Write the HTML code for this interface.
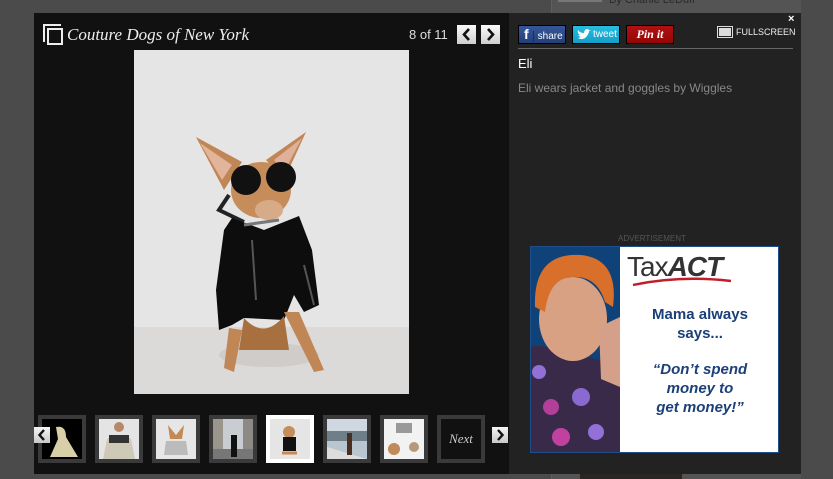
<!DOCTYPE html>
<html><head><meta charset="utf-8">
<style>
*{margin:0;padding:0;box-sizing:border-box}
body{width:833px;height:479px;background:#4b4b4b;position:relative;overflow:hidden;font-family:"Liberation Sans",Arial,sans-serif}
.bgpage{position:absolute;left:551px;top:0;width:250px;height:479px;background:#545454;border-left:1px solid #5e5e5e}
.bgtxt{position:absolute;left:609px;top:-6px;font-size:11px;color:#2a2a2a}
.left{position:absolute;left:34px;top:13px;width:475px;height:461px;background:#111}
.right{position:absolute;left:509px;top:13px;width:292px;height:461px;background:#222}
.title{position:absolute;left:67px;top:25px;font-family:"Liberation Serif",serif;font-style:italic;font-size:17px;color:#eee}
.count{position:absolute;left:409px;top:27px;font-size:13px;color:#ddd}
.nbtn{position:absolute;top:25px;width:19px;height:19px;background:linear-gradient(#fafafa,#cfcfcf);}
.photo{position:absolute;left:134px;top:50px;width:275px;height:344px;background:#e6e5e6;overflow:hidden}
.thumb{position:absolute;top:415px;width:48px;height:48px;border:4px solid #3a3a3a;overflow:hidden;background:#ddd}
.sbtn{position:absolute;top:25px;height:19px;border:1px solid #000;font-size:10px;color:#fff;line-height:17px}
</style></head><body>
<div class="bgpage"></div><div class="bgtxt">By Charlie LeDuff</div>
<div style="position:absolute;left:558px;top:0;width:44px;height:2px;background:#777"></div>
<div style="position:absolute;left:580px;top:474px;width:102px;height:5px;background:#2a2623"></div>
<div class="left"></div>
<div class="right"></div>
<div style="position:absolute;left:43px;top:24px;width:18px;height:18px;border-left:2px solid #eee;border-top:2px solid #eee"></div>
<div style="position:absolute;left:47px;top:28px;width:16px;height:17px;border:2px solid #eee"></div>
<div class="title">Couture Dogs of New York</div>
<div class="count">8 of 11</div>
<div class="nbtn" style="left:457px"><svg width="19" height="19"><path d="M12 4 L7 9.5 L12 15" stroke="#111" stroke-width="2.6" fill="none"/></svg></div>
<div class="nbtn" style="left:481px"><svg width="19" height="19"><path d="M7 4 L12 9.5 L7 15" stroke="#111" stroke-width="2.6" fill="none"/></svg></div>
<div class="photo">
<div style="position:absolute;left:0;top:277px;width:275px;height:67px;background:#dcdad8"></div>
<svg width="275" height="344" style="position:absolute;left:0;top:0">
<ellipse cx="135" cy="305" rx="50" ry="12" fill="#cfccc9"/>
<path d="M62 87 L108 112 L90 140 Z" fill="#c08656"/>
<path d="M66 93 L98 115 L88 130 Z" fill="#e2b49a"/>
<path d="M172 82 L132 110 L150 130 Z" fill="#c08656"/>
<path d="M168 88 L140 110 L150 122 Z" fill="#e0b09a"/>
<ellipse cx="127" cy="140" rx="30" ry="28" fill="#c68d5b"/>
<ellipse cx="135" cy="160" rx="14" ry="10" fill="#d7ab88"/>
<circle cx="112" cy="130" r="15" fill="#111"/><circle cx="147" cy="127" r="15" fill="#111"/>
<path d="M95 145 L85 160 L110 172" stroke="#222" stroke-width="4" fill="none"/>
<path d="M98 168 L130 180 L165 166 L178 200 L185 255 L170 262 L160 245 L150 270 L110 268 L98 275 L85 280 L82 240 L90 180 Z" fill="#0d0d0d"/>
<path d="M110 175 L145 170" stroke="#777" stroke-width="3"/>
<path d="M118 190 L122 250 M170 215 L180 255" stroke="#555" stroke-width="2"/>
<path d="M95 278 L90 318 L100 322 L108 280 Z" fill="#c08656"/>
<path d="M150 262 L180 322 L190 320 L165 262 Z" fill="#c08656"/>
<path d="M110 268 Q130 290 150 266 L155 300 L105 300 Z" fill="#a8703f"/>
</svg>
</div>
<div class="thumb" style="left:38px;background:#000"><svg width="40" height="40"><path d="M14 8 Q24 6 24 18 L36 38 L8 38 L16 20 Z" fill="#d8cfa8"/></svg></div>
<div class="thumb" style="left:95px;background:#e4e4e4"><svg width="40" height="40"><path d="M4 40 L8 20 Q20 12 32 20 L36 40 Z" fill="#cfc9b7"/><circle cx="20" cy="8" r="5" fill="#b58968"/><rect x="10" y="16" width="20" height="8" fill="#333"/></svg></div>
<div class="thumb" style="left:152px;background:#e6e6e6"><svg width="40" height="40"><path d="M12 6 L20 16 L28 6 L26 20 L14 20 Z" fill="#c38a55"/><path d="M10 22 L30 22 L32 36 L8 36 Z" fill="#bbb"/></svg></div>
<div class="thumb" style="left:209px;background:#c9cdd2"><svg width="40" height="40"><rect x="0" y="0" width="10" height="30" fill="#9a968e"/><rect x="30" y="0" width="10" height="30" fill="#8d8a85"/><rect x="0" y="30" width="40" height="10" fill="#777"/><rect x="18" y="16" width="6" height="22" fill="#111"/></svg></div>
<div class="thumb" style="left:266px;border-color:#fff;background:#e6e5e6"><svg width="40" height="40"><circle cx="19" cy="13" r="6" fill="#c58d5a"/><rect x="13" y="18" width="13" height="14" fill="#111"/><path d="M12 34 L27 34" stroke="#c58a55" stroke-width="3"/></svg></div>
<div class="thumb" style="left:323px;background:#b9c5cf"><svg width="40" height="40"><rect x="0" y="0" width="40" height="12" fill="#cfd8e0"/><rect x="0" y="12" width="40" height="10" fill="#6e7f8a"/><path d="M0 40 L0 28 L40 40 Z" fill="#ddd"/><rect x="20" y="14" width="5" height="22" fill="#4a2e22"/></svg></div>
<div class="thumb" style="left:380px;background:#f2f2f2"><svg width="40" height="40"><rect x="12" y="4" width="16" height="10" fill="#999"/><circle cx="10" cy="30" r="6" fill="#c08a5a"/><circle cx="30" cy="28" r="5" fill="#b59a7a"/></svg></div>
<div class="thumb" style="left:437px;background:#111;color:#ccc;font-family:'Liberation Serif',serif;font-style:italic;font-size:13px;line-height:40px;text-align:center">Next</div>
<div style="position:absolute;left:34px;top:427px;width:16px;height:16px;background:linear-gradient(#f5f5f5,#c8c8c8)"><svg width="16" height="16"><path d="M10 3 L5.5 8 L10 13" stroke="#111" stroke-width="2.4" fill="none"/></svg></div>
<div style="position:absolute;left:492px;top:427px;width:16px;height:16px;background:linear-gradient(#f5f5f5,#c8c8c8)"><svg width="16" height="16"><path d="M6 3 L10.5 8 L6 13" stroke="#111" stroke-width="2.4" fill="none"/></svg></div>
<div style="position:absolute;left:788px;top:13px;color:#fff;font-size:11px;font-weight:bold">×</div>
<div class="sbtn" style="left:518px;width:48px;background:linear-gradient(#35579a,#233f78)"><span style="font-weight:bold;font-size:14px;padding-left:5px">f</span><span style="border-left:1px solid #1a2e57;margin-left:4px;padding-left:4px">share</span></div>
<div class="sbtn" style="left:572px;width:48px;background:linear-gradient(#27bde0,#129fc8)"><svg width="14" height="12" style="position:absolute;left:4px;top:3px"><path d="M1 9 Q6 12 10 7 Q12 4 12 2 L14 1 L12 1 Q10 -1 8 1 Q7 3 7 4 Q3 4 1 1 Q0 4 3 6 L1 6 Q3 8 4 8 Z" fill="#fff"/></svg><span style="padding-left:20px">tweet</span></div>
<div class="sbtn" style="left:626px;width:48px;background:linear-gradient(#b11010,#960606);text-align:center;font-family:'Liberation Serif',serif;font-style:italic;font-weight:bold;font-size:12px">Pin it</div>
<div style="position:absolute;left:717px;top:26px;width:16px;height:12px;border:1px solid #ddd;padding:1px"><div style="width:100%;height:100%;background:#ddd"></div></div>
<div style="position:absolute;left:736px;top:27px;font-size:9px;color:#eee">FULLSCREEN</div>
<div style="position:absolute;left:518px;top:48px;width:275px;height:1px;background:#666"></div>
<div style="position:absolute;left:518px;top:56px;font-size:13px;color:#fff">Eli</div>
<div style="position:absolute;left:518px;top:81px;font-size:12px;color:#888">Eli wears jacket and goggles by Wiggles</div>
<div style="position:absolute;left:618px;top:234px;font-size:8px;color:#555">ADVERTISEMENT</div>
<div style="position:absolute;left:530px;top:246px;width:249px;height:207px;background:#fff;border:1px solid #1f4f8a;overflow:hidden">
<div style="position:absolute;left:0;top:0;width:89px;height:207px;background:#10427a"></div>
<svg width="90" height="207" style="position:absolute;left:0;top:0">
<path d="M0 100 Q10 95 40 110 Q70 110 89 120 L89 207 L0 207 Z" fill="#3a2a4a"/>
<circle cx="20" cy="160" r="8" fill="#b2409a"/><circle cx="50" cy="150" r="9" fill="#8a6ad0"/><circle cx="30" cy="190" r="9" fill="#c0429e"/><circle cx="65" cy="185" r="8" fill="#9270d8"/><circle cx="8" cy="125" r="7" fill="#9270d8"/>
<ellipse cx="42" cy="72" rx="34" ry="42" fill="#d9a184"/>
<path d="M4 60 Q2 5 50 8 Q88 12 82 60 L74 55 Q66 28 40 30 Q18 32 14 65 Z" fill="#d8702c"/>
<path d="M68 80 L89 70 L89 140 L70 132 Z" fill="#d4a08a"/>
</svg>
<div style="position:absolute;left:96px;top:4px;font-size:28px;color:#333;letter-spacing:-1px">Tax<b style="font-style:italic">ACT</b></div>
<svg width="110" height="12" style="position:absolute;left:100px;top:28px"><path d="M2 10 Q50 0 100 6" stroke="#c01f2a" stroke-width="2.5" fill="none"/></svg>
<div style="position:absolute;left:89px;top:58px;width:160px;text-align:center;color:#1b3f7a;font-weight:bold;font-size:15px;line-height:19px">Mama always<br>says...</div>
<div style="position:absolute;left:89px;top:113px;width:160px;text-align:center;color:#1b3f7a;font-weight:bold;font-style:italic;font-size:15px;line-height:19px">“Don’t spend<br>money to<br>get money!”</div>
</div>
</body></html>
